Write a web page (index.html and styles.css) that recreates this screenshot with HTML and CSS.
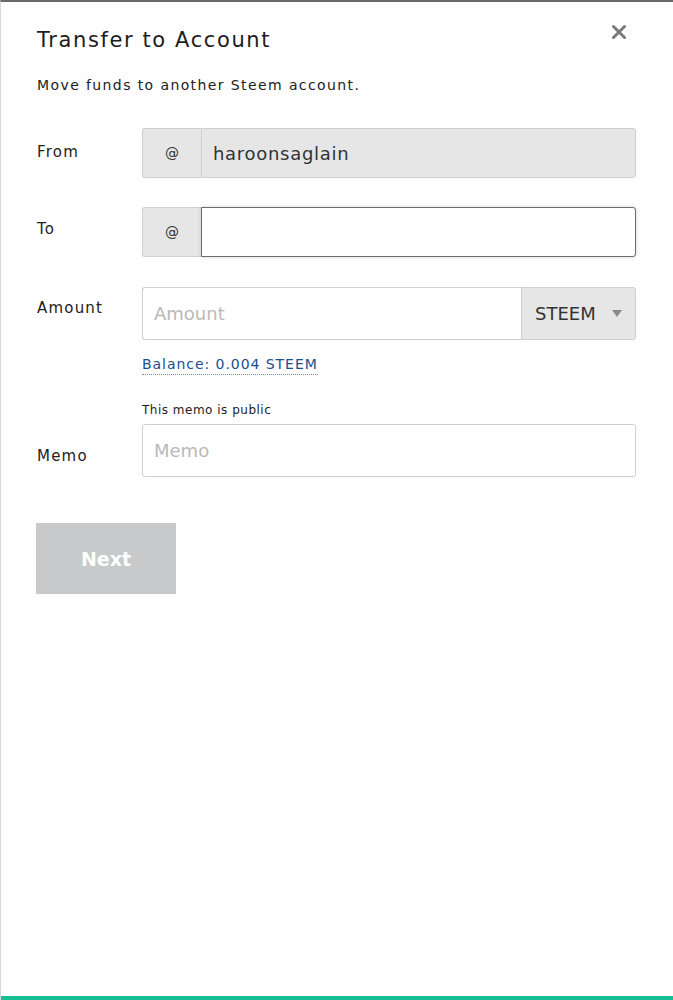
FILE: index.html
```html
<!DOCTYPE html>
<html>
<head>
<meta charset="utf-8">
<link rel="stylesheet" href="styles.css">
</head>
<body>
<div class="modal">
  <div class="head">
    <h1 class="title">Transfer to Account</h1>
    <button class="close" aria-label="Close">
      <svg width="16" height="16" viewBox="0 0 16 16"><path d="M2.5 2.5 L13.5 13.5 M13.5 2.5 L2.5 13.5" stroke="#7a7a7a" stroke-width="3" stroke-linecap="round"/></svg>
    </button>
  </div>
  <p class="sub">Move funds to another Steem account.</p>

  <div class="row row-from">
    <div class="label">From</div>
    <div class="group">
      <span class="addon">@</span>
      <div class="field field-disabled">haroonsaglain</div>
    </div>
  </div>

  <div class="row row-to">
    <div class="label">To</div>
    <div class="group">
      <span class="addon">@</span>
      <div class="field field-focus"></div>
    </div>
  </div>

  <div class="row row-amount">
    <div class="label">Amount</div>
    <div class="col">
      <div class="group group-amount">
        <div class="field field-amount placeholder">Amount</div>
        <div class="select">STEEM<span class="caret"></span></div>
      </div>
      <a class="balance">Balance: 0.004 STEEM</a>
    </div>
  </div>

  <div class="row row-memo">
    <div class="label label-memo">Memo</div>
    <div class="col">
      <div class="note">This memo is public</div>
      <div class="field field-memo placeholder">Memo</div>
    </div>
  </div>

  <div class="actions">
    <button class="next">Next</button>
  </div>
</div>
<div class="bottom-bar"></div>
</body>
</html>
```
FILE: styles.css
```css
html, body {
  margin: 0;
  padding: 0;
  height: 1000px;
  overflow: hidden;
}
body {
  background: #fefefe;
  font-family: "DejaVu Sans", "Noto Sans", sans-serif;
  color: #222;
  border-top: 2px solid #6a6a6a;
  border-left: 1px solid #d8d8d8;
  box-sizing: border-box;
  position: relative;
}
.modal {
  padding: 0 37px 0 36px;
}
.head {
  display: flex;
  justify-content: space-between;
  align-items: flex-start;
  padding-top: 24px;
}
.title {
  margin: 0;
  font-size: 21px;
  font-weight: normal;
  letter-spacing: 1.6px;
  line-height: 28px;
  color: #1d1d1d;
}
.close {
  border: 0;
  background: none;
  padding: 0;
  margin: -2px 9px 0 0;
  width: 16px;
  height: 16px;
  display: flex;
}
.sub {
  margin: 21px 0 0;
  font-size: 14px;
  line-height: 20px;
  letter-spacing: 1.4px;
  color: #222;
}
.row {
  display: grid;
  grid-template-columns: 105px 1fr;
}
.label {
  font-size: 15px;
  letter-spacing: 1.2px;
  color: #222;
}
.row-from { margin-top: 33px; }
.row-from .label { padding-top: 15px; }
.row-to { margin-top: 29px; }
.row-to .label { padding-top: 13px; }
.row-amount { margin-top: 30px; }
.row-amount .label { padding-top: 12px; }
.row-memo { margin-top: 27px; }
.label-memo { padding-top: 45px; }

.group {
  display: flex;
  height: 50px;
}
.addon {
  width: 58px;
  flex: none;
  background: #e6e6e6;
  border: 1px solid #cfcfcf;
  border-right: 0;
  border-radius: 3px 0 0 3px;
  display: flex;
  align-items: center;
  justify-content: center;
  font-size: 14px;
  color: #333;
}
.field {
  flex: 1;
  box-sizing: border-box;
  border: 1px solid #cfcfcf;
  display: flex;
  align-items: center;
  padding-left: 11px;
  font-size: 18px;
  color: #333;
}
.field-disabled {
  background: #e6e6e6;
  border-radius: 0 3px 3px 0;
  letter-spacing: 0.7px;
}
.field-focus {
  background: #fff;
  border: 1px solid #6a6a6a;
  border-radius: 0 3px 3px 0;
  box-shadow: 0 0 4px rgba(0,0,0,0.15);
}
.col {
  display: flex;
  flex-direction: column;
}
.group-amount {
  height: 53px;
}
.field-amount {
  background: #fff;
  border-radius: 3px 0 0 3px;
  border-right: 0;
}
.placeholder {
  color: #b9b9b9;
  font-size: 18px;
}
.select {
  width: 115px;
  box-sizing: border-box;
  background: #e6e6e6;
  border: 1px solid #cfcfcf;
  border-radius: 0 3px 3px 0;
  display: flex;
  align-items: center;
  padding-left: 13px;
  font-size: 18px;
  color: #333;
  position: relative;
}
.caret {
  position: absolute;
  right: 13px;
  top: 22px;
  width: 0;
  height: 0;
  border-left: 5px solid transparent;
  border-right: 5px solid transparent;
  border-top: 7px solid #8a8a8a;
}
.balance {
  align-self: flex-start;
  margin-top: 15px;
  font-size: 14px;
  line-height: 18px;
  color: #1a4f8a;
  letter-spacing: 0.95px;
  border-bottom: 1px dotted #6b8fb5;
  padding-bottom: 1px;
}
.note {
  font-size: 12px;
  line-height: 16px;
  color: #222;
  letter-spacing: 0.5px;
  margin-bottom: 6px;
}
.field-memo {
  height: 53px;
  flex: none;
  background: #fff;
  border-radius: 3px;
}
.actions {
  margin-top: 46px;
}
.next {
  width: 140px;
  height: 71px;
  margin-left: -1px;
  border: 0;
  background: #c8c9cb;
  color: #fff;
  font-family: "DejaVu Sans", sans-serif;
  font-weight: bold;
  font-size: 19px;
  padding: 0;
}
.bottom-bar {
  position: absolute;
  left: -1px;
  right: 0;
  bottom: 0;
  height: 4px;
  background: #18bf93;
}
```
